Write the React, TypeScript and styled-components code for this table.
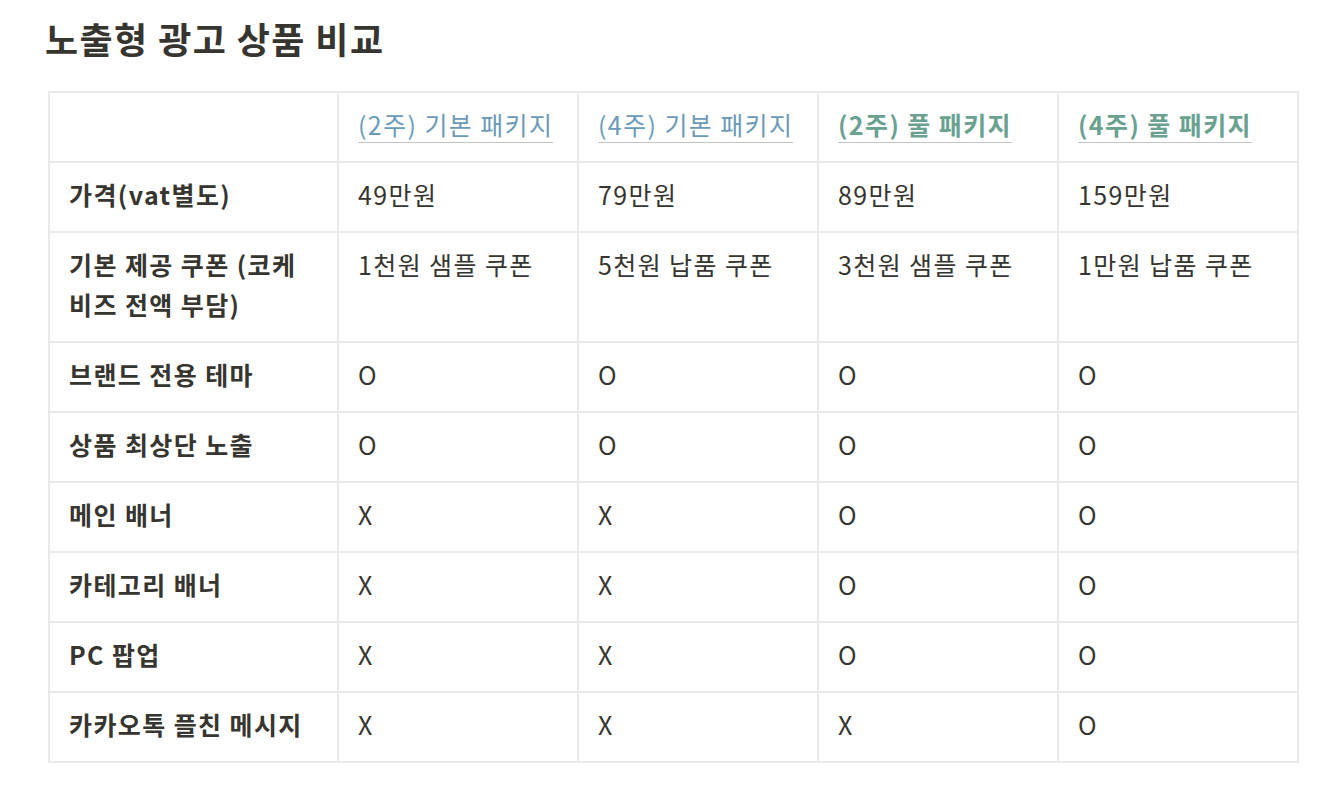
import * as React from 'react';
import styled, { createGlobalStyle } from 'styled-components';

const GlobalStyle = createGlobalStyle`
  body {
    margin: 0;
    background: #ffffff;
    font-family: "Noto Sans CJK KR", "Noto Sans", sans-serif;
    color: #37352f;
  }
`;

const Page = styled.main`
  padding: 15px 40px 24px 45px;
`;

const Title = styled.h2`
  margin: 0 0 30px 0;
  font-size: 36px;
  font-weight: 700;
  line-height: 46px;
  color: #37352f;
  letter-spacing: 1.4px;
`;

const Table = styled.table`
  margin-left: 3px;
  border-collapse: collapse;
  table-layout: fixed;
  width: 1250px;
  font-size: 25px;
`;

const Col = styled.col<{ $w: number }>`
  width: ${p => p.$w}px;
`;

const Row = styled.tr<{ $h: number }>`
  height: ${p => p.$h}px;
`;

const Cell = styled.td<{ $first?: boolean }>`
  border: 2px solid #e9e9e9;
  padding: 11px 19px 15px;
  vertical-align: top;
  line-height: 40px;
  font-weight: ${p => (p.$first ? 700 : 400)};
  color: #37352f;
  letter-spacing: 1.4px;
  white-space: nowrap;
`;

const HeadLink = styled.span<{ $tone: 'blue' | 'green' }>`
  color: ${p => (p.$tone === 'blue' ? '#6b9ab8' : '#6aa190')};
  font-weight: ${p => (p.$tone === 'blue' ? 400 : 700)};
  border-bottom: 1px solid #c4c4c4;
`;

const packages: { label: string; tone: 'blue' | 'green' }[] = [
  { label: '(2주) 기본 패키지', tone: 'blue' },
  { label: '(4주) 기본 패키지', tone: 'blue' },
  { label: '(2주) 풀 패키지', tone: 'green' },
  { label: '(4주) 풀 패키지', tone: 'green' },
];

const rows: { name: React.ReactNode; values: string[] }[] = [
  { name: '가격(vat별도)', values: ['49만원', '79만원', '89만원', '159만원'] },
  {
    name: <>기본 제공 쿠폰 (코케<br />비즈 전액 부담)</>,
    values: ['1천원 샘플 쿠폰', '5천원 납품 쿠폰', '3천원 샘플 쿠폰', '1만원 납품 쿠폰'],
  },
  { name: '브랜드 전용 테마', values: ['O', 'O', 'O', 'O'] },
  { name: '상품 최상단 노출', values: ['O', 'O', 'O', 'O'] },
  { name: '메인 배너', values: ['X', 'X', 'O', 'O'] },
  { name: '카테고리 배너', values: ['X', 'X', 'O', 'O'] },
  { name: 'PC 팝업', values: ['X', 'X', 'O', 'O'] },
  { name: '카카오톡 플친 메시지', values: ['X', 'X', 'X', 'O'] },
];

const widths = [289, 240, 240, 240, 240];

export default function App() {
  return (
    <Page>
      <GlobalStyle />
      <Title>노출형 광고 상품 비교</Title>
      <Table>
        <colgroup>
          {widths.map((w, i) => (
            <Col key={i} $w={w} />
          ))}
        </colgroup>
        <tbody>
          <Row $h={70}>
            <Cell $first />
            {packages.map(p => (
              <Cell key={p.label}>
                <HeadLink $tone={p.tone}>{p.label}</HeadLink>
              </Cell>
            ))}
          </Row>
          {rows.map((r, i) => (
            <Row key={i} $h={i === 1 ? 110 : 70}>
              <Cell $first>{r.name}</Cell>
              {r.values.map((v, j) => (
                <Cell key={j}>{v}</Cell>
              ))}
            </Row>
          ))}
        </tbody>
      </Table>
    </Page>
  );
}
